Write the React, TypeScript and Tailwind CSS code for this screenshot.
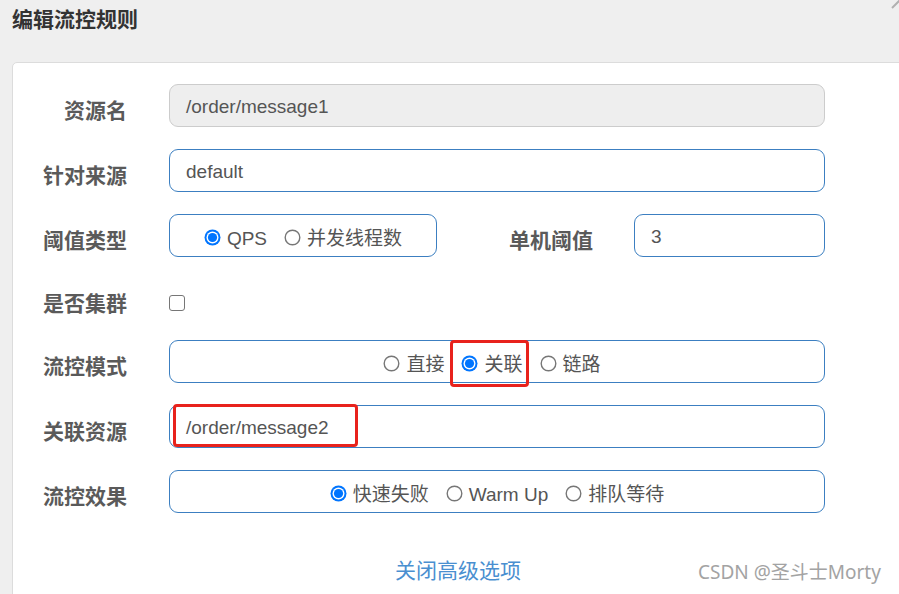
import React from "react";

const font = { fontFamily: '"Liberation Sans", "Noto Sans CJK SC", sans-serif' };

function Label({ children, w = "w-[114px]" }: { children: React.ReactNode; w?: string }) {
  return (
    <div
      className={`${w} shrink-0 text-right text-[21px] font-bold text-[#5a5a5a] leading-none pt-[8px]`}
      style={{ fontFamily: '"Noto Sans CJK SC", sans-serif' }}
    >
      {children}
    </div>
  );
}

function RadioDot({ checked }: { checked?: boolean }) {
  return checked ? (
    <svg width="17" height="17" viewBox="0 0 17 17" className="shrink-0">
      <circle cx="8.5" cy="8.5" r="8" fill="#0075ff" />
      <circle cx="8.5" cy="8.5" r="6" fill="#ffffff" />
      <circle cx="8.5" cy="8.5" r="4.6" fill="#0075ff" />
    </svg>
  ) : (
    <svg width="17" height="17" viewBox="0 0 17 17" className="shrink-0">
      <circle cx="8.5" cy="8.5" r="7.3" fill="#ffffff" stroke="#767676" strokeWidth="1.4" />
    </svg>
  );
}

function Radio({ checked, label }: { checked?: boolean; label: string }) {
  return (
    <div className="flex items-center gap-[6px] pt-[4px]">
      <RadioDot checked={checked} />
      <span className="text-[19px] text-[#555] leading-none pt-[2px]">{label}</span>
    </div>
  );
}

export default function App() {
  return (
    <div className="w-[899px] h-[594px] overflow-hidden bg-[#efefef] relative" style={font}>
      <div className="h-[62px] pl-[12px] pt-[8px]">
        <span
          className="text-[21px] font-bold text-[#333] leading-none"
          style={{ fontFamily: '"Noto Sans CJK SC", sans-serif' }}
        >
          编辑流控规则
        </span>
      </div>
      <svg className="absolute right-0 top-0" width="8" height="10" viewBox="0 0 8 10">
        <path d="M1 8 L9 0" stroke="#b0b0b0" strokeWidth="2" />
      </svg>

      <div className="ml-[12px] w-[900px] h-[540px] bg-white border border-[#dcdcdc] rounded-tl-[5px] pt-[21px]">
        <div className="flex flex-col gap-[22px]">
          {/* Row 1 */}
          <div className="flex items-center h-[43px]">
            <Label>资源名</Label>
            <div className="ml-[42px] w-[656px] h-[43px] rounded-[9px] border border-[#cccccc] bg-[#eeeeee] flex items-center pl-[16px] pt-[3px] text-[19px] text-[#555]">
              /order/message1
            </div>
          </div>
          {/* Row 2 */}
          <div className="flex items-center h-[43px]">
            <Label>针对来源</Label>
            <div className="ml-[42px] w-[656px] h-[43px] rounded-[9px] border border-[#3c7fc1] flex items-center pl-[16px] pt-[3px] text-[19px] text-[#555]">
              default
            </div>
          </div>
          {/* Row 3 */}
          <div className="flex items-center h-[43px]">
            <Label>阈值类型</Label>
            <div className="ml-[42px] w-[268px] h-[43px] rounded-[9px] border border-[#3c7fc1] flex items-center justify-center gap-[17px]">
              <Radio checked label="QPS" />
              <Radio label="并发线程数" />
            </div>
            <Label w="w-[156px]">单机阈值</Label>
            <div className="ml-[41px] w-[191px] h-[43px] rounded-[9px] border border-[#3c7fc1] flex items-center pl-[16px] pt-[3px] text-[19px] text-[#555]">
              3
            </div>
          </div>
          {/* Row 4 */}
          <div className="flex items-center h-[39px]">
            <Label>是否集群</Label>
            <div className="ml-[42px] mt-[8px] w-[16px] h-[16px] rounded-[3px] border-[1.5px] border-[#767676] bg-white" />
          </div>
          {/* Row 5 */}
          <div className="flex items-center h-[43px]">
            <Label>流控模式</Label>
            <div className="relative ml-[42px] w-[656px] h-[43px] rounded-[9px] border border-[#3c7fc1] flex items-center justify-center gap-[17px] pr-[10px]">
              <Radio label="直接" />
              <Radio checked label="关联" />
              <Radio label="链路" />
              <div className="absolute left-[280px] top-[-1px] w-[79px] h-[47px] border-[3px] border-[#e8221c] rounded-[4px]" />
            </div>
          </div>
          {/* Row 6 */}
          <div className="flex items-center h-[43px]">
            <Label>关联资源</Label>
            <div className="relative ml-[42px] w-[656px] h-[43px] rounded-[9px] border border-[#3c7fc1] flex items-center pl-[16px] pt-[3px] text-[19px] text-[#555]">
              /order/message2
              <div className="absolute left-[3px] top-[-2px] w-[185px] h-[43px] border-[3px] border-[#e8221c] rounded-[4px]" />
            </div>
          </div>
          {/* Row 7 */}
          <div className="flex items-center h-[43px]">
            <Label>流控效果</Label>
            <div className="ml-[42px] w-[656px] h-[43px] rounded-[9px] border border-[#3c7fc1] flex items-center justify-center gap-[17px]">
              <Radio checked label="快速失败" />
              <Radio label="Warm Up" />
              <Radio label="排队等待" />
            </div>
          </div>
        </div>

        <div className="mt-[46px] w-[898px] flex justify-center pr-[8px]">
          <span
            className="text-[21px] text-[#4a8fd0] leading-none"
            style={{ fontFamily: '"Noto Sans CJK SC", sans-serif' }}
          >
            关闭高级选项
          </span>
        </div>
      </div>

      <div
        className="absolute left-[698px] top-[563px] text-[19px] text-[#a3a3a3] leading-none"
        style={{ fontFamily: '"Noto Sans", "Noto Sans CJK SC", sans-serif' }}
      >
        CSDN @圣斗士Morty
      </div>
    </div>
  );
}
